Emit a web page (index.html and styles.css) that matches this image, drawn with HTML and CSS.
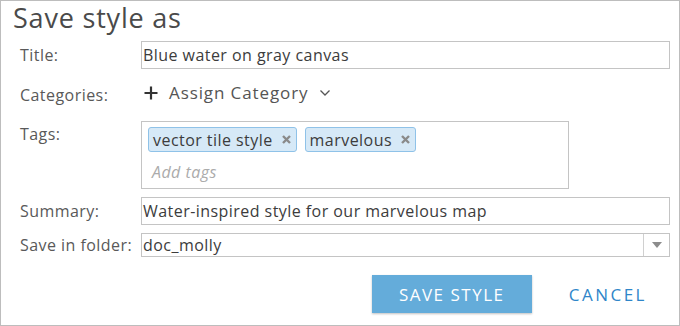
FILE: index.html
```html
<!DOCTYPE html>
<html lang="en">
  <head>
    <meta charset="UTF-8" />
    <title>Save style as</title>
    <link rel="stylesheet" href="styles.css">
  </head>
  <body>
    <div class="dialog">
      <h1 class="dialog-title">Save style as</h1>
      <div class="form">
        <label class="label">Title:</label>
        <div class="field text-input">Blue water on gray canvas</div>

        <label class="label">Categories:</label>
        <div class="field categories">
          <svg class="plus" width="14" height="14" viewBox="0 0 14 14">
            <path d="M7 0.5v13M0.5 7h13" stroke="#333" stroke-width="2.2" fill="none" />
          </svg>
          <span>Assign Category</span>
          <svg class="chevron" width="12" height="8" viewBox="0 0 12 8">
            <path d="M1.5 1.5l4.5 4.5 4.5-4.5" stroke="#555" stroke-width="1.3" fill="none" />
          </svg>
        </div>

        <label class="label label-top">Tags:</label>
        <div class="field tags-box">
          <div class="tags">
            <span class="tag">vector tile style
              <svg class="tag-x" width="9" height="9" viewBox="0 0 9 9">
                <path d="M1 1l7 7M8 1l-7 7" stroke="#8a8a8a" stroke-width="2.4" fill="none" />
              </svg>
            </span>
            <span class="tag">marvelous
              <svg class="tag-x" width="9" height="9" viewBox="0 0 9 9">
                <path d="M1 1l7 7M8 1l-7 7" stroke="#8a8a8a" stroke-width="2.4" fill="none" />
              </svg>
            </span>
          </div>
          <div class="placeholder">Add tags</div>
        </div>

        <label class="label">Summary:</label>
        <div class="field text-input">Water-inspired style for our marvelous map</div>

        <label class="label">Save in folder:</label>
        <div class="field select">
          <span class="select-value">doc_molly</span>
          <span class="select-arrow">
            <svg width="10" height="6" viewBox="0 0 10 6">
              <path d="M0 0h10L5 6z" fill="#8c8c8c" />
            </svg>
          </span>
        </div>
      </div>
      <div class="actions">
        <button class="btn btn-save">SAVE STYLE</button>
        <button class="btn btn-cancel">CANCEL</button>
      </div>
    </div>
  </body>
</html>
```

FILE: styles.css
```css
:root {
  --border-color: #bdbdbd;
  --input-border: #c4c4c4;
  --text-color: #4c4c4c;
  --label-color: #595959;
  --blue: #64acda;
  --link-blue: #2f86c9;
}

body {
  margin: 0;
  font-family: "Open Sans", Lato, sans-serif;
  color: var(--text-color);
  background: #fff;
}

.dialog {
  box-sizing: border-box;
  width: 680px;
  height: 326px;
  border: 1px solid var(--border-color);
}

.dialog-title {
  margin: 0;
  padding: 1px 12px 0;
  font-size: 27px;
  line-height: 32px;
  letter-spacing: 0.8px;
  font-weight: normal;
  color: #4a4a4a;
}

.form {
  display: grid;
  grid-template-columns: 121px 1fr;
  row-gap: 8px;
  padding: 7px 9px 0 19px;
  align-items: center;
  font-size: 16px;
  line-height: 20px;
  letter-spacing: 0.45px;
}

.label {
  color: var(--label-color);
}

.label-top {
  align-self: start;
  padding-top: 3px;
}

.field {
  box-sizing: border-box;
}

.text-input {
  height: 28px;
  line-height: 26px;
  padding: 0 1px;
  border: 1px solid var(--input-border);
  color: #3c3c3c;
}

.categories {
  height: 36px;
  display: flex;
  align-items: center;
  padding: 0 0 4px 3px;
  font-size: 17px;
  letter-spacing: 0.9px;
  color: #555;
}

.categories .plus {
  margin-right: 11px;
}

.categories .chevron {
  margin-left: 10px;
}

.tags-box {
  width: 428px;
  height: 68px;
  border: 1px solid var(--input-border);
  padding: 5px 6px;
}

.tags {
  display: flex;
  gap: 8px;
}

.tag {
  box-sizing: border-box;
  height: 25px;
  display: flex;
  align-items: center;
  gap: 9px;
  padding: 0 5px 0 4px;
  background: #d6e9f7;
  border: 1px solid #8fc2e8;
  border-radius: 3px;
  color: #3c3c3c;
}

.placeholder {
  padding: 10px 0 0 4px;
  font-style: italic;
  color: #ababab;
}

.select {
  height: 24px;
  display: flex;
  border: 1px solid var(--input-border);
  color: #3c3c3c;
}

.select-value {
  flex: 1;
  line-height: 22px;
  padding: 0 1px;
}

.select-arrow {
  width: 25px;
  border-left: 1px solid #d0d0d0;
  display: flex;
  align-items: center;
  justify-content: center;
}

.actions {
  display: flex;
  justify-content: flex-end;
  align-items: center;
  padding: 18px 9px 0 0;
}

.btn {
  font-family: "Open Sans", Lato, sans-serif;
  font-size: 17px;
  border: none;
  background: none;
  cursor: pointer;
  letter-spacing: 1.5px;
}

.btn-save {
  width: 160px;
  height: 38px;
  background: var(--blue);
  color: #fff;
  box-shadow: 0 1px 2px rgba(0, 0, 0, 0.25);
}

.btn-cancel {
  margin-left: 14px;
  padding: 0 23px;
  height: 38px;
  letter-spacing: 2.5px;
  color: var(--link-blue);
}
```
